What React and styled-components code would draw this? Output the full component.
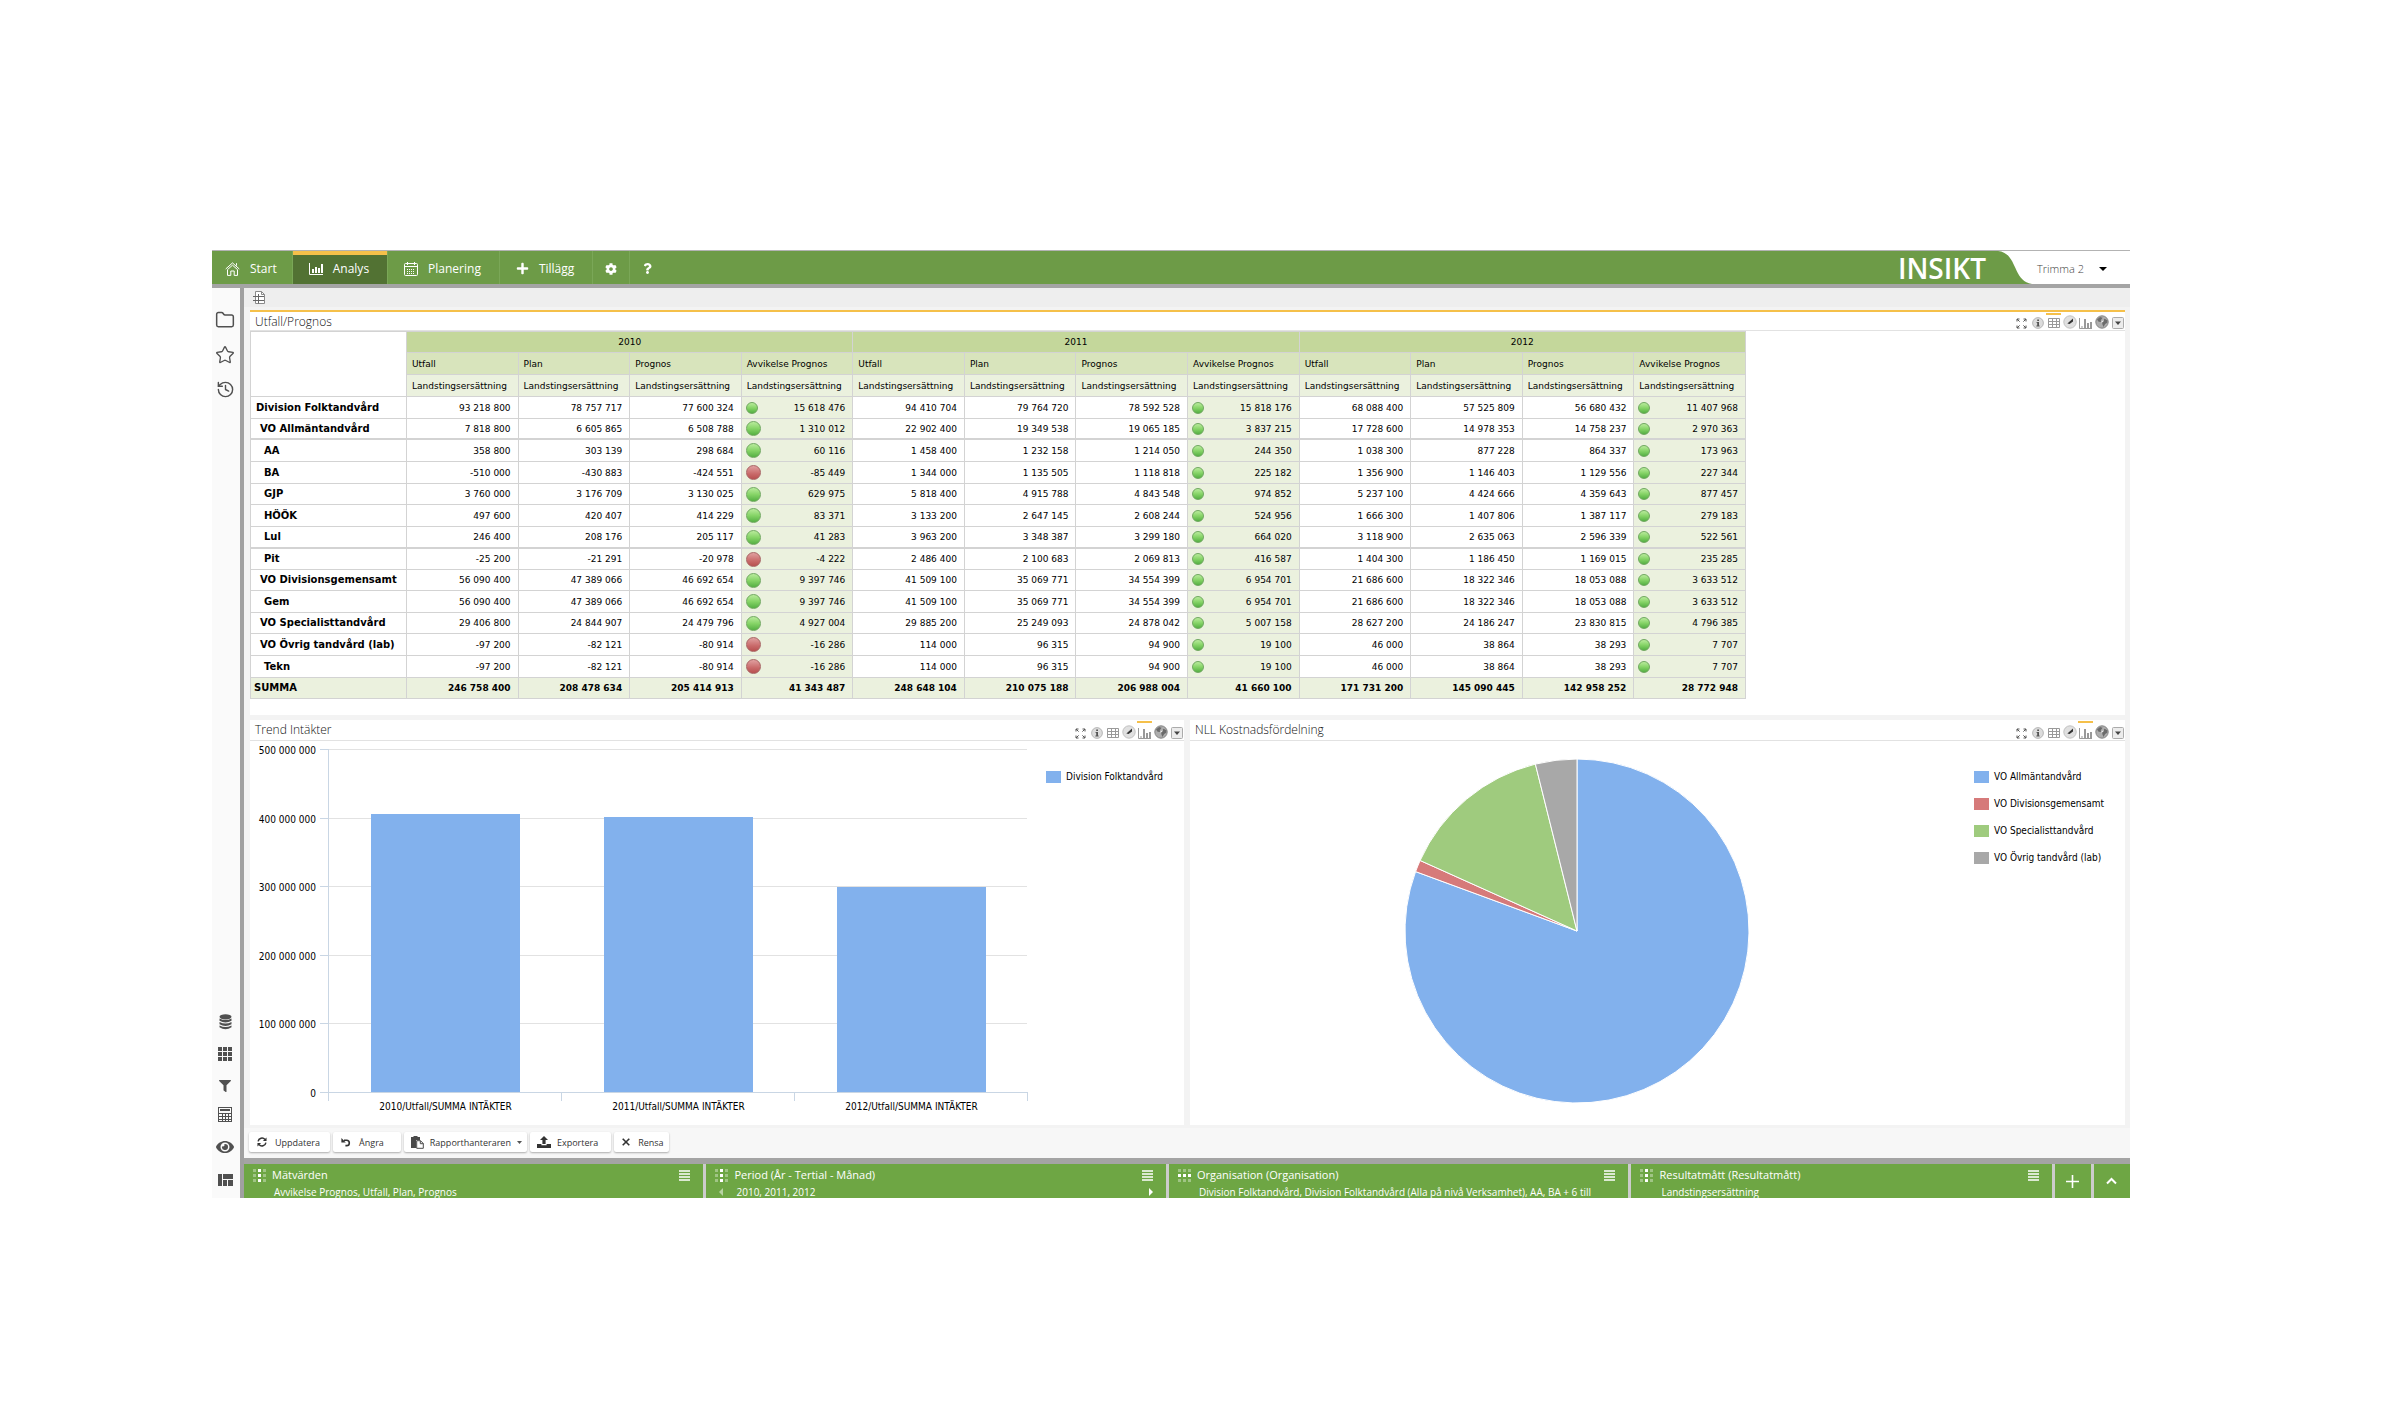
import React from 'react'
import styled, { createGlobalStyle, css } from 'styled-components'
import { Star, Folder, History } from 'lucide-react'
import { FaPlus, FaCog, FaQuestion, FaFilter, FaEye } from 'react-icons/fa'

const columns = ['Utfall', 'Plan', 'Prognos', 'Avvikelse Prognos']
const years = ['2010', '2011', '2012']

const rows = [
  { name: 'Division Folktandvård', level: 0, values: ['93 218 800', '78 757 717', '77 600 324', '15 618 476', '94 410 704', '79 764 720', '78 592 528', '15 818 176', '68 088 400', '57 525 809', '56 680 432', '11 407 968'] },
  { name: 'VO Allmäntandvård', level: 1, values: ['7 818 800', '6 605 865', '6 508 788', '1 310 012', '22 902 400', '19 349 538', '19 065 185', '3 837 215', '17 728 600', '14 978 353', '14 758 237', '2 970 363'] },
  { name: 'AA', level: 2, values: ['358 800', '303 139', '298 684', '60 116', '1 458 400', '1 232 158', '1 214 050', '244 350', '1 038 300', '877 228', '864 337', '173 963'] },
  { name: 'BA', level: 2, values: ['-510 000', '-430 883', '-424 551', '-85 449', '1 344 000', '1 135 505', '1 118 818', '225 182', '1 356 900', '1 146 403', '1 129 556', '227 344'] },
  { name: 'GJP', level: 2, values: ['3 760 000', '3 176 709', '3 130 025', '629 975', '5 818 400', '4 915 788', '4 843 548', '974 852', '5 237 100', '4 424 666', '4 359 643', '877 457'] },
  { name: 'HÖÖK', level: 2, values: ['497 600', '420 407', '414 229', '83 371', '3 133 200', '2 647 145', '2 608 244', '524 956', '1 666 300', '1 407 806', '1 387 117', '279 183'] },
  { name: 'Lul', level: 2, values: ['246 400', '208 176', '205 117', '41 283', '3 963 200', '3 348 387', '3 299 180', '664 020', '3 118 900', '2 635 063', '2 596 339', '522 561'] },
  { name: 'Pit', level: 2, values: ['-25 200', '-21 291', '-20 978', '-4 222', '2 486 400', '2 100 683', '2 069 813', '416 587', '1 404 300', '1 186 450', '1 169 015', '235 285'] },
  { name: 'VO Divisionsgemensamt', level: 1, values: ['56 090 400', '47 389 066', '46 692 654', '9 397 746', '41 509 100', '35 069 771', '34 554 399', '6 954 701', '21 686 600', '18 322 346', '18 053 088', '3 633 512'] },
  { name: 'Gem', level: 2, values: ['56 090 400', '47 389 066', '46 692 654', '9 397 746', '41 509 100', '35 069 771', '34 554 399', '6 954 701', '21 686 600', '18 322 346', '18 053 088', '3 633 512'] },
  { name: 'VO Specialisttandvård', level: 1, values: ['29 406 800', '24 844 907', '24 479 796', '4 927 004', '29 885 200', '25 249 093', '24 878 042', '5 007 158', '28 627 200', '24 186 247', '23 830 815', '4 796 385'] },
  { name: 'VO Övrig tandvård (lab)', level: 1, values: ['-97 200', '-82 121', '-80 914', '-16 286', '114 000', '96 315', '94 900', '19 100', '46 000', '38 864', '38 293', '7 707'] },
  { name: 'Tekn', level: 2, values: ['-97 200', '-82 121', '-80 914', '-16 286', '114 000', '96 315', '94 900', '19 100', '46 000', '38 864', '38 293', '7 707'] },
]

const totals = ['246 758 400', '208 478 634', '205 414 913', '41 343 487', '248 648 104', '210 075 188', '206 988 004', '41 660 100', '171 731 200', '145 090 445', '142 958 252', '28 772 948']

const bars = [
  { label: '2010/Utfall/SUMMA INTÄKTER', value: 405 },
  { label: '2011/Utfall/SUMMA INTÄKTER', value: 401 },
  { label: '2012/Utfall/SUMMA INTÄKTER', value: 299 },
]

const slices = [
  { label: 'VO Allmäntandvård', color: '#82b1ed', from: 0, to: 290.2 },
  { label: 'VO Divisionsgemensamt', color: '#d67a7a', from: 290.2, to: 294.2 },
  { label: 'VO Specialisttandvård', color: '#9fcb7e', from: 294.2, to: 346 },
  { label: 'VO Övrig tandvård (lab)', color: '#a8a8a8', from: 346, to: 360 },
]

const dimensions = [
  { title: 'Mätvärden', text: 'Avvikelse Prognos, Utfall, Plan, Prognos' },
  { title: 'Period (År - Tertial - Månad)', text: '2010, 2011, 2012', pager: true },
  { title: 'Organisation (Organisation)', text: 'Division Folktandvård, Division Folktandvård (Alla på nivå Verksamhet), AA, BA + 6 till', horizontal: true },
  { title: 'Resultatmått (Resultatmått)', text: 'Landstingsersättning' },
]

/* ---------- icons ---------- */

const HomeIcon = () => (
  <svg width="15" height="14" viewBox="0 0 15 14" fill="none" stroke="currentColor" strokeWidth="1">
    <path d="M0.7 7 7.5 0.9 14.3 7M11.5 1.2v2.4M2.5 7.6 7.5 3.2l5 4.4v5.8H9.2V9H5.8v4.4H2.5z" />
  </svg>
)

const ChartIcon = () => (
  <svg width="14" height="12" viewBox="0 0 14 12" fill="none" stroke="currentColor">
    <path d="M0.5 0v11.5H14" />
    <path strokeWidth="2" d="M4 6v4M7 4v6M10 5v5M13 1v9" />
  </svg>
)

const CalendarIcon = () => (
  <svg width="14" height="14" viewBox="0 0 14 14" fill="none" stroke="currentColor">
    <rect x="0.5" y="1.5" width="13" height="12" rx="1" />
    <path d="M0.5 4.5h13M3.5 0v3M10.5 0v3" />
    <path strokeDasharray="1 1" d="M3 7.5h8M3 9.5h8M3 11.5h8" />
  </svg>
)

const SheetIcon = () => (
  <svg width="13" height="13" viewBox="0 0 13 13" fill="none">
    <path d="M2.5 0.5h6l3 3v9h-9z" fill="#fff" stroke="#8a8a8a" />
    <path d="M8.5 0.5v3h3" stroke="#8a8a8a" />
    <path d="M0 5.5h11M0 9.5h11M5.5 3v9.5" stroke="#666" />
  </svg>
)

const DatabaseIcon = () => (
  <svg width="13" height="16" viewBox="0 0 13 16" fill="currentColor">
    <ellipse cx="6.5" cy="2.8" rx="6" ry="2.6" />
    <path d="M0.5 4.6q6 3 12 0v2.2q-6 3.4-12 0zM0.5 8q6 3 12 0v2.2q-6 3.4-12 0zM0.5 11.4q6 3 12 0v1.8q-6 4-12 0z" />
  </svg>
)

const GridIcon = () => (
  <svg width="14" height="14" viewBox="0 0 14 14" fill="currentColor">
    {[0, 5, 10].map(y => [0, 5, 10].map(x => <rect key={x + '-' + y} x={x} y={y} width="4" height="4" />))}
  </svg>
)

const CalculatorIcon = () => (
  <svg width="14" height="15" viewBox="0 0 14 15" fill="none" stroke="currentColor">
    <rect x="0.5" y="0.5" width="13" height="14" />
    <path d="M2 3h10" strokeWidth="2" />
    <path d="M1 6.5h12M1 9.5h12M1 12.5h12M4.5 6v8M7.5 6v8M10.5 6v8" />
  </svg>
)

const LayoutIcon = () => (
  <svg width="15" height="12" viewBox="0 0 15 12" fill="currentColor">
    <path d="M0 0h4v12H0zM5 0h10v5H5zM5 6h4v6H5zM10 6h5v6h-5z" />
  </svg>
)

const ExpandIcon = () => (
  <svg width="11" height="11" viewBox="0 0 11 11" fill="none" stroke="#555">
    <path d="M1 3.5V1h2.5M1 1l2.6 2.6M7.5 1H10v2.5M10 1 7.4 3.6M1 7.5V10h2.5M1 10l2.6-2.6M10 7.5V10H7.5M10 10 7.4 7.4" />
  </svg>
)

const InfoIcon = () => (
  <svg width="12" height="12" viewBox="0 0 12 12">
    <circle cx="6" cy="6" r="5.4" fill="#dcdcdc" stroke="#a8a8a8" strokeWidth="0.8" />
    <path d="M5.2 2.4h1.8v1.6H5.2zM4.6 5H7v3.6h0.6v1H4.4v-1h0.8V6h-0.6z" fill="#555" />
  </svg>
)

const TableIcon = () => (
  <svg width="12" height="11" viewBox="0 0 12 11" fill="none" stroke="#999">
    <path d="M0.5 0.5h11v9H0.5zM0.5 3.5h11M0.5 6.5h11M4.5 0.5v9M8.5 0.5v9" />
  </svg>
)

const GaugeIcon = () => (
  <svg width="14" height="14" viewBox="0 0 14 14">
    <circle cx="7" cy="7" r="6.2" fill="#e0e0e0" stroke="#c2c2c2" />
    <path d="M4.4 8.6 10 3.6v2.8L6.6 9z" fill="#333" />
  </svg>
)

const BarsIcon = () => (
  <svg width="13" height="12" viewBox="0 0 13 12" fill="none" stroke="#999">
    <path d="M0.5 1v10.5H13" />
    <path d="M3 9v2" />
    <path d="M6 2v9M9 6v5M12 5v6" strokeWidth="2" />
  </svg>
)

const GlobeIcon = () => (
  <svg width="14" height="14" viewBox="0 0 14 14">
    <circle cx="7" cy="7" r="6.2" fill="#adadad" stroke="#858585" />
    <path d="M2 4.5 5 2l2.6 0.8L5.8 5.2 6 7 3.6 6.8zM7 6.4l2.6-2.6 2.8 1.4-0.2 2.6-2 1.2L8.4 12 7.4 9.2z" fill="#6b6b6b" />
    <path d="M5.6 7.4 8.8 4.4 8.2 7z" fill="#eee" />
  </svg>
)

const DropIcon = () => (
  <svg width="12" height="12" viewBox="0 0 12 12">
    <rect x="0.5" y="0.5" width="11" height="11" rx="1" fill="#ececec" stroke="#ababab" />
    <path d="M3 4.5h6L6 8z" fill="#444" />
  </svg>
)

const RefreshIcon = () => (
  <svg width="10" height="10" viewBox="0 0 11 11" fill="none" stroke="currentColor" strokeWidth="1.6">
    <path d="M1.2 4.8A4.3 4.3 0 0 1 8.8 2.8M9.8 6.2A4.3 4.3 0 0 1 2.2 8.2" />
    <path d="M10.5 0.5v4H6.5zM0.5 10.5v-4h4z" fill="currentColor" stroke="none" />
  </svg>
)

const UndoIcon = () => (
  <svg width="10" height="10" viewBox="0 0 10 10" fill="none" stroke="currentColor" strokeWidth="1.6">
    <path d="M3 3.2h2.6a2.7 2.7 0 0 1 0 5.4H4.4" />
    <path d="M0.4 1v4.4h4.4z" fill="currentColor" stroke="none" />
  </svg>
)

const ReportIcon = () => (
  <svg width="13" height="13" viewBox="0 0 13 13">
    <path d="M0 1h2.5V0h4v1H9v3H5v8H0z" fill="#4a4a4a" />
    <path d="M5.7 4.7h3.8l2.8 2.8v4.8H5.7zM9.3 4.7v3h3" fill="#fff" stroke="#4a4a4a" />
  </svg>
)

const ExportIcon = () => (
  <svg width="14" height="12" viewBox="0 0 14 12" fill="currentColor">
    <path d="M7 0l4 4H8.6v4H5.4V4H3zM0 8h4.4v1.2h5.2V8H14v4H0z" />
  </svg>
)

const ClearIcon = () => (
  <svg width="8" height="8" viewBox="0 0 8 8" stroke="currentColor" strokeWidth="1.6">
    <path d="M0.7 0.7l6.6 6.6M7.3 0.7 0.7 7.3" />
  </svg>
)

const DotsIcon = ({ horizontal }) => (
  <svg width="13" height="13" viewBox="0 0 13 13" fill="#fff">
    {[0, 5, 10].map(y =>
      [0, 5, 10].map(x => (
        <rect key={x + '-' + y} x={x} y={y} width="3" height="3" opacity={(horizontal ? y : x) === 5 ? 1 : 0.35} />
      ))
    )}
  </svg>
)

const MenuIcon = () => (
  <svg width="11" height="11" viewBox="0 0 11 11" stroke="#fff" strokeWidth="1.5">
    <path d="M0 1h11M0 4h11M0 7h11M0 10h11" />
  </svg>
)

/* ---------- charts ---------- */

function BarChart() {
  const left = 78
  const top = 8
  const bottom = 351
  const slot = 233
  const scale = (bottom - top) / 500
  return (
    <Chart viewBox="0 0 790 384" role="img" aria-label="Trend Intäkter">
      {[0, 100, 200, 300, 400, 500].map(tick => {
        const y = Math.round(bottom - tick * scale) + 0.5
        return (
          <g key={tick}>
            <line x1={left} x2={left + slot * 3} y1={y} y2={y} stroke={tick ? '#e2e2e2' : '#c9d6e4'} />
            <line x1={left - 8} x2={left} y1={y} y2={y} stroke="#c9d6e4" />
            <AxisText x={left - 12} y={y + 4} textAnchor="end">{tick ? tick + ' 000 000' : '0'}</AxisText>
          </g>
        )
      })}
      <line x1={left + 0.5} x2={left + 0.5} y1={top} y2={bottom + 9} stroke="#c9d6e4" />
      {bars.map((bar, i) => {
        const x = left + slot * i
        const height = Math.round(bar.value * scale)
        return (
          <g key={bar.label}>
            <rect x={x + 43} y={bottom - height} width="149" height={height} fill="#82b1ed" />
            <line x1={x + slot + 0.5} x2={x + slot + 0.5} y1={bottom} y2={bottom + 9} stroke="#c9d6e4" />
            <AxisText x={x + slot / 2 + 1} y={bottom + 18} textAnchor="middle">{bar.label}</AxisText>
          </g>
        )
      })}
    </Chart>
  )
}

function PieChart() {
  const cx = 387
  const cy = 190
  const r = 172
  const point = angle => {
    const rad = (angle * Math.PI) / 180
    return `${cx + r * Math.sin(rad)} ${cy - r * Math.cos(rad)}`
  }
  return (
    <Chart viewBox="0 0 778 384" role="img" aria-label="NLL Kostnadsfördelning">
      {slices.map(s => (
        <path
          key={s.label}
          d={`M${cx} ${cy}L${point(s.from)}A${r} ${r} 0 ${s.to - s.from > 180 ? 1 : 0} 1 ${point(s.to)}Z`}
          fill={s.color}
          stroke="#fff"
          strokeLinejoin="round"
        />
      ))}
    </Chart>
  )
}

/* ---------- parts ---------- */

const tools = [
  ['Maximera', ExpandIcon],
  ['Information', InfoIcon],
  ['Tabell', TableIcon],
  ['Mätare', GaugeIcon],
  ['Diagram', BarsIcon],
  ['Karta', GlobeIcon],
  ['Mer', DropIcon],
]

function PanelHeader({ title, active }) {
  return (
    <PanelTop>
      <PanelTitle>{title}</PanelTitle>
      <Tools>
        {tools.map(([name, Icon]) => (
          <Tool key={name} aria-label={name} $active={name === active}>
            <Icon />
          </Tool>
        ))}
      </Tools>
    </PanelTop>
  )
}

function ResultTable() {
  return (
    <Table>
      <colgroup>
        <NameCol />
        {totals.map((t, i) => <col key={i} />)}
      </colgroup>
      <thead>
        <tr>
          <Corner rowSpan={3} />
          {years.map(year => <YearCell key={year} colSpan={4} scope="colgroup">{year}</YearCell>)}
        </tr>
        <tr>
          {years.map(year => columns.map(c => <MeasureCell key={year + c} scope="col">{c}</MeasureCell>))}
        </tr>
        <tr>
          {years.map(year => columns.map(c => <UnitCell key={year + c} scope="col">Landstingsersättning</UnitCell>))}
        </tr>
      </thead>
      <tbody>
        {rows.map((row, r) => (
          <tr key={row.name}>
            <NameCell scope="row" $level={row.level}>{row.name}</NameCell>
            {row.values.map((value, i) =>
              i % 4 === 3 ? (
                <DeviationCell key={i}>
                  <Deviation>
                    <Lamp $negative={value.startsWith('-')} $large={i === 3 && r > 0} />
                    {value}
                  </Deviation>
                </DeviationCell>
              ) : (
                <ValueCell key={i}>{value}</ValueCell>
              )
            )}
          </tr>
        ))}
        <tr>
          <TotalName scope="row">SUMMA</TotalName>
          {totals.map((value, i) => <TotalCell key={i}>{value}</TotalCell>)}
        </tr>
      </tbody>
    </Table>
  )
}

export default function App() {
  return (
    <Page>
      <GlobalStyle />
      <Frame>
        <Header>
          <Nav>
            <Tab><HomeIcon />Start</Tab>
            <Tab $active><ChartIcon />Analys</Tab>
            <Tab><CalendarIcon />Planering</Tab>
            <Tab><FaPlus size={13} />Tillägg</Tab>
            <Tab aria-label="Inställningar"><FaCog size={12} /></Tab>
            <Tab aria-label="Hjälp"><FaQuestion size={11} /></Tab>
          </Nav>
          <Logo>INSIKT</Logo>
          <Curve viewBox="0 0 34 33" preserveAspectRatio="none">
            <path d="M0 0C20 2 14 30 34 33V0z" fill="#fff" />
          </Curve>
          <User>
            Trimma 2
            <svg width="8" height="4" viewBox="0 0 8 4"><path d="M0 0h8L4 4z" fill="#000" /></svg>
          </User>
        </Header>

        <Body>
          <Sidebar>
            <SideTop>
              <SideButton $tall aria-label="Mappar"><Folder size={20} strokeWidth={1.8} /></SideButton>
              <SideButton $tall aria-label="Favoriter"><Star size={20} strokeWidth={1.6} /></SideButton>
              <SideButton $tall aria-label="Historik"><History size={19} strokeWidth={1.8} /></SideButton>
            </SideTop>
            <SideGroup $gap={8}>
              <SideButton aria-label="Databas"><DatabaseIcon /></SideButton>
              <SideButton aria-label="Rutnät"><GridIcon /></SideButton>
              <SideButton aria-label="Filter"><FaFilter size={12} /></SideButton>
            </SideGroup>
            <SideGroup $gap={9}>
              <SideButton aria-label="Kalkylator"><CalculatorIcon /></SideButton>
              <SideButton aria-label="Visa"><FaEye size={18} /></SideButton>
              <SideButton aria-label="Layout"><LayoutIcon /></SideButton>
            </SideGroup>
          </Sidebar>

          <Main>
            <Toolbar>
              <IconButton aria-label="Nytt blad"><SheetIcon /></IconButton>
            </Toolbar>
            <Board>
              <Panel $selected>
                <PanelHeader title="Utfall/Prognos" active="Tabell" />
                <TableBody><ResultTable /></TableBody>
              </Panel>
              <Split>
                <Panel>
                  <PanelHeader title="Trend Intäkter" active="Diagram" />
                  <ChartBody>
                    <BarChart />
                    <Legend $width={144}>
                      <LegendItem><Swatch $color="#82b1ed" />Division Folktandvård</LegendItem>
                    </Legend>
                  </ChartBody>
                </Panel>
                <Panel>
                  <PanelHeader title="NLL Kostnadsfördelning" active="Diagram" />
                  <ChartBody>
                    <PieChart />
                    <Legend $width={157}>
                      {slices.map(s => (
                        <LegendItem key={s.label}><Swatch $color={s.color} />{s.label}</LegendItem>
                      ))}
                    </Legend>
                  </ChartBody>
                </Panel>
              </Split>
            </Board>
            <Actions>
              <Action $end={10}><RefreshIcon />Uppdatera</Action>
              <Action $end={17}><UndoIcon />Ångra</Action>
              <Action $tight $end={5}>
                <ReportIcon />Rapporthanteraren
                <svg width="5" height="3" viewBox="0 0 5 3"><path d="M0 0h5L2.5 3z" fill="#555" /></svg>
              </Action>
              <Action $tight $end={13}><ExportIcon />Exportera</Action>
              <Action $end={5}><ClearIcon />Rensa</Action>
            </Actions>
            <Dimensions>
              {dimensions.map(d => (
                <Dimension key={d.title}>
                  <DimensionTop>
                    <DotsIcon horizontal={d.horizontal} />
                    <DimensionTitle>{d.title}</DimensionTitle>
                    <IconButton aria-label={'Meny ' + d.title}><MenuIcon /></IconButton>
                  </DimensionTop>
                  <DimensionText>
                    <Arrow $hidden={!d.pager} $dim viewBox="0 0 4 8"><path d="M4 0v8L0 4z" /></Arrow>
                    <DimensionValue>{d.text}</DimensionValue>
                    <Arrow $hidden={!d.pager} viewBox="0 0 4 8"><path d="M0 0v8l4-4z" /></Arrow>
                  </DimensionText>
                </Dimension>
              ))}
              <Square aria-label="Lägg till">
                <svg width="13" height="13" viewBox="0 0 13 13" stroke="#fff" strokeWidth="1.6"><path d="M0 6.5h13M6.5 0v13" /></svg>
              </Square>
              <Square aria-label="Fäll upp">
                <svg width="11" height="8" viewBox="0 0 11 8" fill="none" stroke="#fff" strokeWidth="2"><path d="M1 6.5l4.5-4.5L10 6.5" /></svg>
              </Square>
            </Dimensions>
          </Main>
        </Body>
      </Frame>
    </Page>
  )
}

/* ---------- styles ---------- */

const GlobalStyle = createGlobalStyle`
  * {
    box-sizing: border-box;
  }
  body {
    margin: 0;
    background: #fff;
    color: #000;
    font-family: "Open Sans", sans-serif;
  }
  button {
    margin: 0;
    padding: 0;
    border: 0;
    background: none;
    color: inherit;
    font-family: inherit;
    cursor: pointer;
  }
  svg {
    display: block;
    flex-shrink: 0;
  }
`

const Page = styled.div`
  padding: 250px 276px 228px 212px;
`

const Frame = styled.div`
  display: flex;
  flex-direction: column;
`

const Header = styled.header`
  display: flex;
  height: 38px;
  border-top: 1px solid #b3b3b3;
  border-bottom: 4px solid #a4a4a4;
  background: #6d9b47;
`

const Nav = styled.nav`
  display: flex;
  flex: 1;
`

const Tab = styled.button`
  display: flex;
  align-items: center;
  gap: 10px;
  padding: 2px 15px 0 13px;
  border-right: 1px solid #7aa757;
  color: #fff;
  font-size: 12px;
  line-height: 16px;

  &:nth-child(n + 2) {
    padding: 2px 18px 0 16px;
  }
  &:nth-child(n + 5) {
    padding: 2px 12px 0;
  }
  &:last-child {
    border-right: 0;
  }

  ${p => p.$active && css`
    background: #527233;
    box-shadow: inset 0 4px 0 #f5c04a;
  `}
`

const Logo = styled.div`
  align-self: center;
  padding-right: 12px;
  color: #fff;
  font-size: 28px;
  font-weight: 600;
  line-height: 32px;
`

const Curve = styled.svg`
  width: 34px;
  height: 33px;
`

const User = styled.button`
  display: flex;
  align-items: center;
  justify-content: space-between;
  width: 98px;
  padding: 2px 23px 0 5px;
  background: #fff;
  color: #444;
  font-size: 11px;
  font-weight: 300;
`

const Body = styled.div`
  display: flex;
`

const Sidebar = styled.aside`
  display: flex;
  flex-direction: column;
  gap: 4px;
  width: 32px;
  padding: 14px 0 6px;
  border-right: 4px solid #a0a0a0;
  background: #fafafa;
  color: #505050;
`

const SideTop = styled.div`
  flex: 1;
`

const SideGroup = styled.div`
  display: flex;
  flex-direction: column;
  gap: ${p => p.$gap}px;
`

const SideButton = styled.button`
  display: flex;
  align-items: center;
  justify-content: center;
  width: 100%;
  padding-right: 2px;
  height: ${p => (p.$tall ? 35 : 24)}px;
`

const Main = styled.main`
  flex: 1;
  min-width: 0;
`

const Toolbar = styled.div`
  display: flex;
  align-items: center;
  height: 19px;
  padding-left: 9px;
  background: #eee;
`

const IconButton = styled.button`
  display: flex;
`

const Board = styled.div`
  display: flex;
  flex-direction: column;
  gap: 5px;
  padding: 3px 5px 3px 6px;
  background: #f3f3f3;
`

const Split = styled.div`
  display: grid;
  grid-template-columns: 934fr 935fr;
  gap: 6px;
`

const Panel = styled.section`
  min-width: 0;
  background: #fff;
  border-top: ${p => (p.$selected ? '2px solid #f5c04a' : '0')};
  --header-height: ${p => (p.$selected ? 19 : 21)}px;
`

const PanelTop = styled.div`
  display: flex;
  justify-content: space-between;
  height: var(--header-height);
  border-bottom: 1px solid #e2e2e2;
`

const PanelTitle = styled.h2`
  margin: 0;
  padding-left: 5px;
  color: #111;
  font-size: 12px;
  font-weight: 300;
  line-height: 20px;
`

const Tools = styled.div`
  display: flex;
  gap: 1px;
  padding-top: 1px;
`

const Tool = styled.button`
  display: flex;
  align-items: flex-end;
  justify-content: center;
  width: 15px;
  padding-bottom: 1px;
  border-top: 2px solid ${p => (p.$active ? '#f5c04a' : 'transparent')};
`

const TableBody = styled.div`
  padding-bottom: 16px;
`

const Table = styled.table`
  width: 1496px;
  table-layout: fixed;
  border-collapse: separate;
  border-spacing: 0;
  border: solid #d3d3d3;
  border-width: 1px 0 0 1px;
  font-family: Verdana, "DejaVu Sans", sans-serif;
  font-size: 9px;
  line-height: 12px;

  th,
  td {
    padding: 0;
    border: solid #d3d3d3;
    border-width: 0 1px 1px 0;
    white-space: nowrap;
  }
  tr {
    height: 22px;
  }
  thead tr:first-child {
    height: 21px;
  }
  tbody tr:nth-child(3n + 2),
  tbody tr:nth-child(9) {
    height: 21px;
  }
  tbody tr:nth-child(5n + 2):not(:nth-child(12)) > * {
    border-bottom-width: 2px;
  }
`

const NameCol = styled.col`
  width: 156px;
`

const Corner = styled.td`
  background: #fff;
`

const YearCell = styled.th`
  background: #c4d79b;
  font-weight: 400;
`

const MeasureCell = styled.th`
  background: #d8e4bc;
  font-weight: 400;
  text-align: left;
  && {
    padding-left: 5px;
  }
`

const UnitCell = styled(MeasureCell)`
  background: #ebf1de;
`

const NameCell = styled.th`
  font-size: 10px;
  font-weight: 700;
  text-align: left;
  && {
    padding-left: ${p => 5 + p.$level * 4}px;
  }
`

const ValueCell = styled.td`
  text-align: right;
  && {
    padding-right: 7px;
  }
`

const DeviationCell = styled(ValueCell)`
  background: #ebf1de;
`

const Deviation = styled.div`
  display: flex;
  align-items: center;
  justify-content: space-between;
  height: 16px;
  padding-left: 4px;
`

const Lamp = styled.span`
  width: ${p => (p.$large ? 15 : 12)}px;
  height: ${p => (p.$large ? 15 : 12)}px;
  border: 1px solid ${p => (p.$negative ? '#a86464' : '#6fa85f')};
  border-radius: 50%;
  background: ${p => (p.$negative
    ? 'linear-gradient(#e0a0a0, #c96a6a 60%, #b85050)'
    : 'linear-gradient(#b9eb9c, #86d467 50%, #55b043)')};
`

const TotalName = styled.th`
  background: #ebf1de;
  font-size: 10px;
  text-align: left;
  && {
    padding-left: 3px;
  }
`

const TotalCell = styled(ValueCell)`
  background: #ebf1de;
  font-weight: 700;
`

const ChartBody = styled.div`
  display: flex;
`

const Chart = styled.svg`
  flex: 1;
  min-width: 0;
`

const AxisText = styled.text`
  fill: #000;
  font-family: Tahoma, "DejaVu Sans Condensed", "DejaVu Sans", sans-serif;
  font-size: 10px;
`

const Legend = styled.ul`
  display: flex;
  flex-direction: column;
  gap: 13px;
  flex: 0 0 ${p => p.$width}px;
  margin: 0;
  padding: 29px 0 0 6px;
  list-style: none;
`

const LegendItem = styled.li`
  display: flex;
  align-items: center;
  gap: 5px;
  font-family: Tahoma, "DejaVu Sans Condensed", "DejaVu Sans", sans-serif;
  font-size: 10px;
  line-height: 14px;
  white-space: nowrap;
`

const Swatch = styled.span`
  width: 15px;
  height: 12px;
  background: ${p => p.$color};
`

const Actions = styled.div`
  display: flex;
  gap: 3px;
  padding: 4px 5px 6px;
  border-bottom: 6px solid #a4a4a4;
  background: #f7f7f7;
`

const Action = styled.button`
  display: flex;
  align-items: center;
  gap: ${p => (p.$tight ? 6 : 8)}px;
  height: 20px;
  padding-left: ${p => (p.$tight ? 7 : 8)}px;
  padding-right: ${p => p.$end}px;
  border-radius: 2px;
  background: #fff;
  box-shadow: 0 1px 2px rgba(0, 0, 0, 0.3);
  color: #333;
  font-size: 9px;
`

const Dimensions = styled.footer`
  display: grid;
  grid-template-columns: 460fr 460fr 460fr 421fr 36px 36px;
  gap: 3px;
  height: 34px;
  background: #ccc;
  color: #fff;
`

const Dimension = styled.div`
  min-width: 0;
  overflow: hidden;
  padding: 3px 13px 0 9px;
  background: #6ea644;
`

const DimensionTop = styled.div`
  display: flex;
  align-items: center;
  gap: 6px;
  height: 16px;
`

const DimensionTitle = styled.span`
  flex: 1;
  font-size: 11px;
  line-height: 16px;
`

const DimensionText = styled.div`
  display: flex;
  align-items: center;
  height: 18px;
  padding-left: 4px;
  gap: 13px;
  font-size: 10px;
`

const DimensionValue = styled.span`
  flex: 1;
  white-space: nowrap;
`

const Arrow = styled.svg`
  width: 4px;
  height: 8px;
  fill: #fff;
  opacity: ${p => (p.$dim ? 0.5 : 1)};
  visibility: ${p => (p.$hidden ? 'hidden' : 'visible')};
`

const Square = styled.button`
  display: flex;
  align-items: center;
  justify-content: center;
  background: #6ea644;
`
